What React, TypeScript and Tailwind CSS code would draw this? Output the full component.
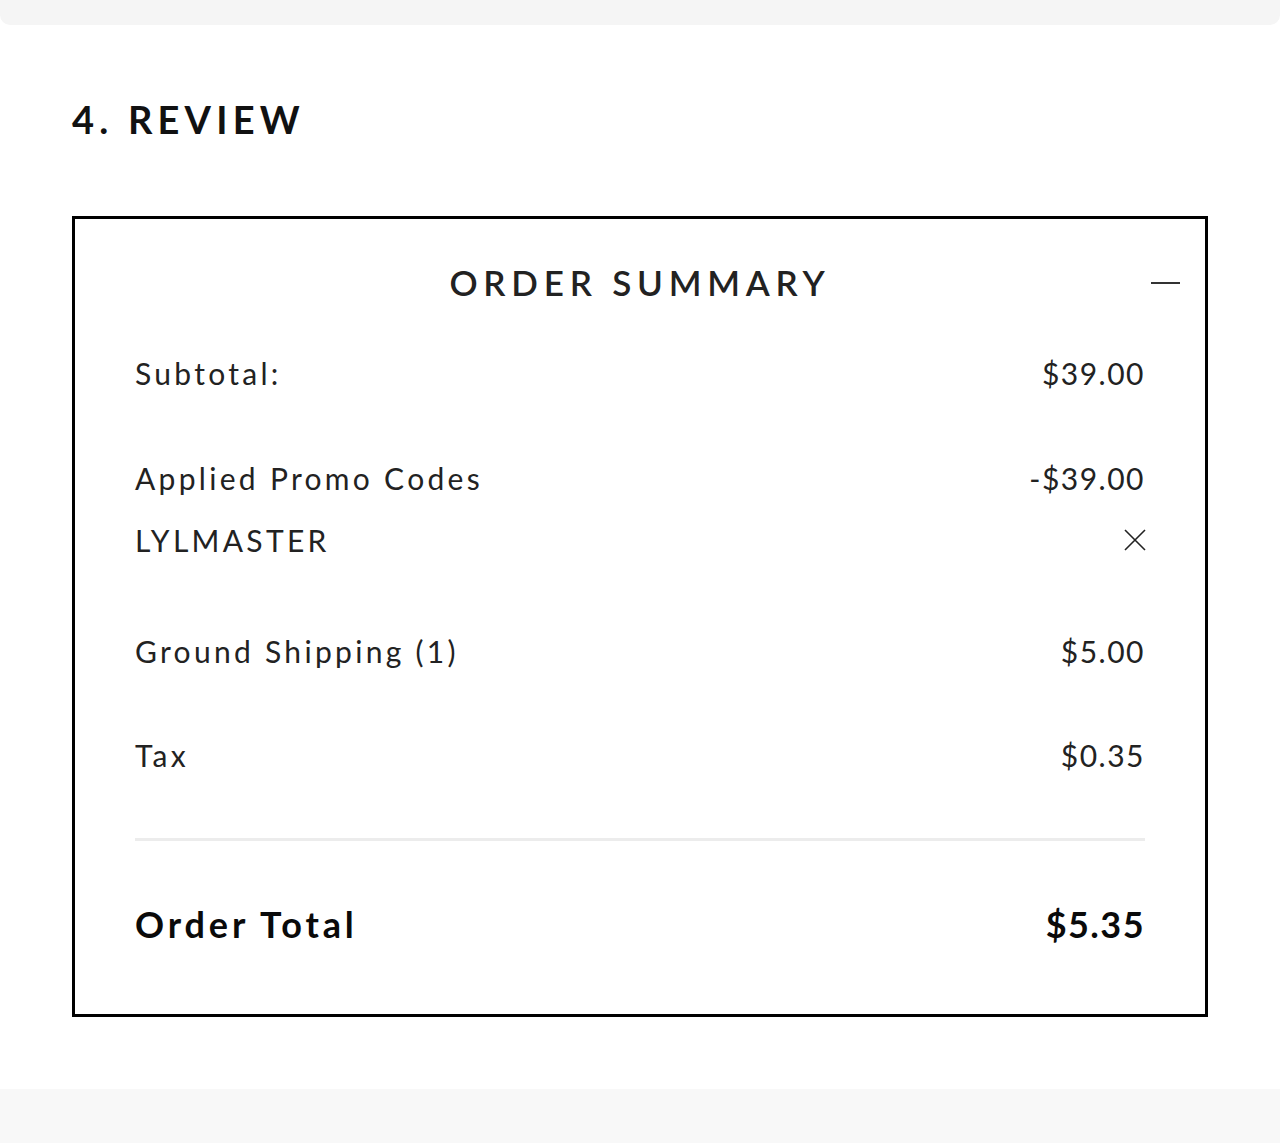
type Row = { label: string; value: string; mt: string };

function SummaryRow({ label, value, mt }: Row) {
  return (
    <div className={`flex h-[48px] items-center justify-between ${mt}`}>
      <span className="tracking-[0.11em]">{label}</span>
      <span className="tracking-[0.05em]">{value}</span>
    </div>
  );
}

export default function App() {
  return (
    <div
      className="min-h-[1143px] bg-white text-[#1c1c1c]"
      style={{ fontFamily: "Lato, 'Noto Sans', sans-serif" }}
    >
      <div className="h-[25px] rounded-b-[10px] bg-[#f5f5f5]" />

      <section className="px-[72px] pt-[71px] pb-[72px]">
        <h2 className="flex h-[47px] items-center text-[38px] font-bold tracking-[0.137em] text-[#111]">
          4. REVIEW
        </h2>

        <div className="mt-[73px] border-[3px] border-black px-[60px] pb-[62px] pt-[31px] text-[30px] font-normal text-[#222]">
          <div className="relative flex h-[64px] items-center justify-center">
            <span className="text-[35px] font-semibold tracking-[0.165em] text-[#222]">ORDER SUMMARY</span>
            <span className="absolute right-[-35px] top-[32px] h-[2px] w-[29px] bg-[#333]" />
          </div>

          <SummaryRow label="Subtotal:" value="$39.00" mt="mt-[35px]" />
          <SummaryRow label="Applied Promo Codes" value="-$39.00" mt="mt-[57px]" />
          <div className="mt-[14px] flex h-[48px] items-center justify-between">
            <span className="tracking-[0.11em]">LYLMASTER</span>
            <svg width="22" height="22" viewBox="0 0 22 22" className="mr-[-1px]" aria-label="Remove">
              <path d="M1 1 21 21M21 1 1 21" stroke="#222" strokeWidth="1.6" fill="none" />
            </svg>
          </div>
          <SummaryRow label="Ground Shipping (1)" value="$5.00" mt="mt-[63px]" />
          <SummaryRow label="Tax" value="$0.35" mt="mt-[56px]" />

          <div className="mt-[59px] h-[3px] bg-[#ececec]" />

          <div className="mt-[55px] flex h-[56px] items-center justify-between text-[36px] font-bold text-[#0a0a0a]">
            <span className="tracking-[0.108em]">Order Total</span>
            <span className="tracking-[0.04em]">$5.35</span>
          </div>
        </div>
      </section>

      <div className="h-[54px] bg-[#f8f8f8]" />
    </div>
  );
}
